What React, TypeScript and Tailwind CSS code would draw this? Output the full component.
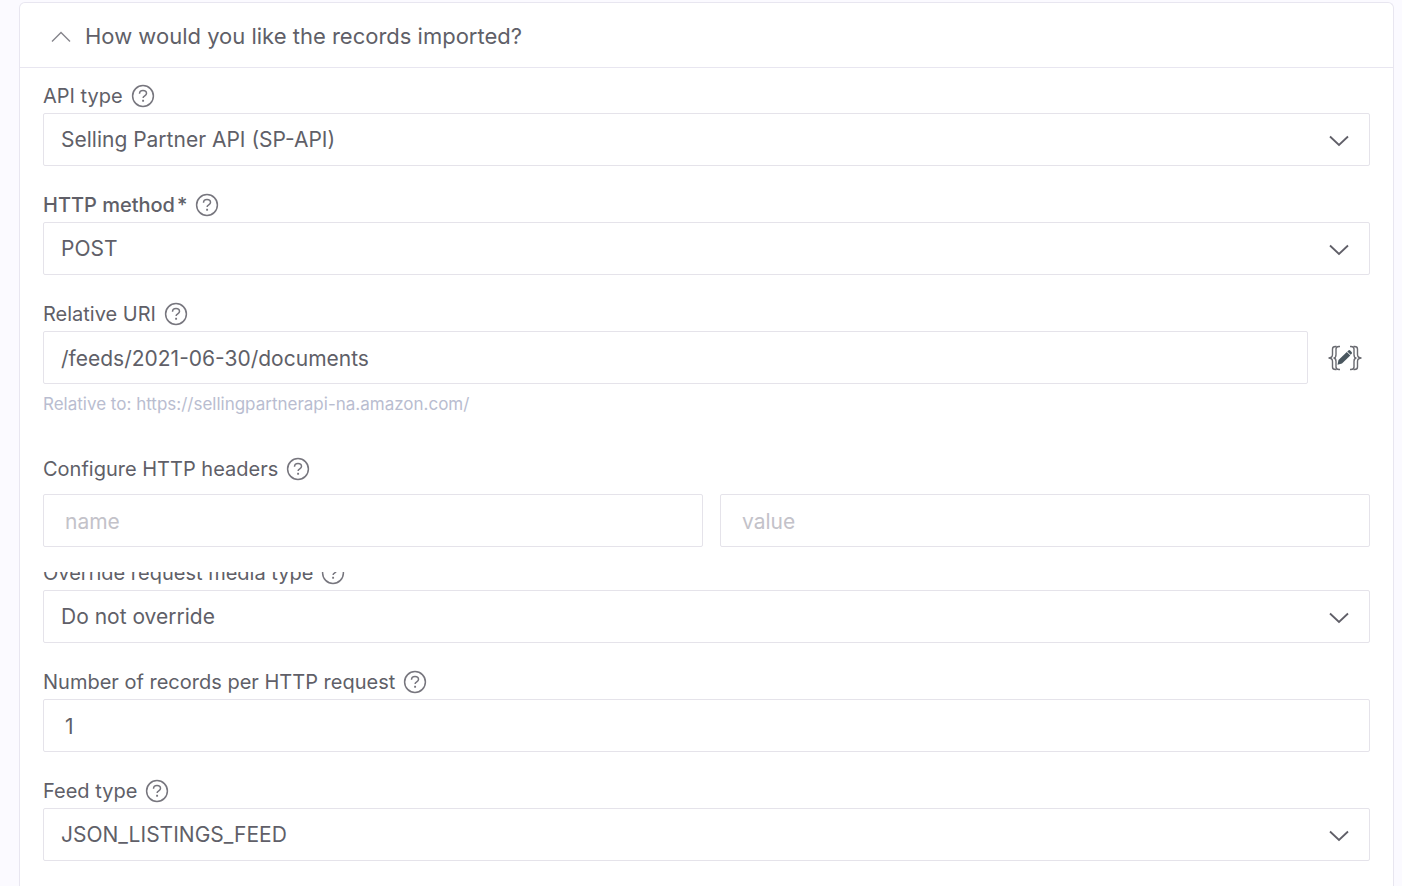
import { useState } from "react";
import type { ReactNode } from "react";

const boxClass =
  "block h-[53px] w-full min-w-0 rounded-xs border border-[#e5e3ea] bg-white text-[21px] text-[#605f68] outline-none placeholder:text-[#c3c2c9] focus:border-[#a9a6b8]";

const HelpIcon = () => (
  <svg viewBox="0 0 24 24" fill="none" stroke="#77767e" strokeWidth="1.5" className="size-6 shrink-0">
    <circle cx="12" cy="12" r="10.4" />
    <path d="M8.500 9.700c0-2 1.500-3.200 3.500-3.200s3.500 1.200 3.500 2.900c0 2.400-3.400 2.400-3.400 4.600" />
    <path d="M12.100 15.800v1.900" strokeWidth="1.9" />
  </svg>
);

const ExpressionIcon = () => (
  <svg viewBox="0 0 34 26" fill="none" stroke="#6a6b71" strokeWidth="1.4" className="h-[26px] w-[34px]">
    <path d="M8.500 1.500H7.500Q4.500 1.500 4.500 4v5.500Q4.500 13 .5 13q4 0 4 3.500V22q0 2.500 3 2.500h1" />
    <path d="M12 1.500H11Q8 1.500 8 4v5.500Q8 13 5.500 13q2.500 0 2.500 3.500V22q0 2.500 3 2.500h1" />
    <path d="M25.500 1.500h1q3 0 3 2.500v5.500q0 3.500 4 3.500-4 0-4 3.500V22q0 2.500-3 2.500h-1" />
    <path d="M22 1.500h1q3 0 3 2.500v5.500q0 3.500 2.500 3.500-2.500 0-2.500 3.500V22q0 2.500-3 2.500h-1" />
    <path
      d="M9.500 19.800l1-4.900 8.300-8 3.500 3.500-8.300 8.100z"
      fill="#4a575f"
      stroke="none"
    />
    <path d="M19.300 6.400l1.100-1q.9-.8 1.800.1l1.400 1.400q.9.900.1 1.800l-1 1z" fill="#4a575f" stroke="none" />
  </svg>
);

type FieldProps = {
  id: string;
  label: string;
  required?: boolean;
  clipped?: boolean;
  children: ReactNode;
};

const Field = ({ id, label, required, clipped, children }: FieldProps) => (
  <div>
    <div className={clipped ? "flex h-[18px] items-end overflow-hidden" : "flex h-[34px] items-end"}>
      <div className="flex h-[34px] shrink-0 items-center gap-2">
        <label
          htmlFor={id}
          className={required ? "text-xl font-medium text-[#605f68]" : "text-xl text-[#605f68]"}
        >
          {label}
          {required && <span className="ml-0.5">*</span>}
        </label>
        <button type="button" aria-label={`Help: ${label}`}>
          <HelpIcon />
        </button>
      </div>
    </div>
    {children}
  </div>
);

const Select = ({ id, options }: { id: string; options: string[] }) => {
  const [value, setValue] = useState(options[0]);

  return (
    <div className="relative">
      <select
        id={id}
        value={value}
        onChange={(e) => setValue(e.target.value)}
        className={`${boxClass} appearance-none pr-14 pl-[17px]`}
      >
        {options.map((option) => (
          <option key={option}>{option}</option>
        ))}
      </select>
      <svg
        viewBox="0 0 20 12"
        fill="none"
        stroke="#605f68"
        strokeWidth="1.8"
        className="pointer-events-none absolute top-[22px] right-[21px] h-3 w-5"
      >
        <path d="M1 1.500l9 8.500 9-8.500" />
      </svg>
    </div>
  );
};

const App = () => {
  const [open, setOpen] = useState(true);
  const [uri, setUri] = useState("/feeds/2021-06-30/documents");
  const [count, setCount] = useState("1");

  return (
    <div className="min-h-screen bg-[#fbfaff] pt-0.5 pr-2 pl-[19px] font-['Inter',sans-serif]">
      <section className="min-h-[calc(100vh-2px)] rounded-t-md border border-b-0 border-[#e8e6f0] bg-white">
        <button
          type="button"
          aria-expanded={open}
          onClick={() => setOpen(!open)}
          className="flex h-[65px] w-full items-center gap-3.5 border-b border-[#e8e6f0] pt-[3px] pl-[31px] text-[22px] text-[#605f68]"
        >
          <svg
            viewBox="0 0 20 12"
            fill="none"
            stroke="#85848b"
            strokeWidth="1.4"
            className={open ? "h-3 w-5" : "h-3 w-5 rotate-180"}
          >
            <path d="M1 10.500l9-9 9 9" />
          </svg>
          How would you like the records imported?
        </button>

        {open && (
          <form className="flex flex-col px-[23px] pt-[11px]" onSubmit={(e) => e.preventDefault()}>
            <div className="flex flex-col gap-[22px]">
              <Field id="api-type" label="API type">
                <Select id="api-type" options={["Selling Partner API (SP-API)"]} />
              </Field>
              <Field id="http-method" label="HTTP method" required>
                <Select id="http-method" options={["POST", "PUT", "PATCH", "DELETE"]} />
              </Field>
              <Field id="relative-uri" label="Relative URI">
                <div className="flex items-center gap-5">
                  <input
                    id="relative-uri"
                    value={uri}
                    onChange={(e) => setUri(e.target.value)}
                    className={`${boxClass} px-[17px] pt-0.5`}
                  />
                  <button type="button" aria-label="Open handlebars editor" className="mr-2 shrink-0">
                    <ExpressionIcon />
                  </button>
                </div>
                <p className="pt-2 text-[17px] leading-6 text-[#b9bdd0]">
                  Relative to: https://sellingpartnerapi-na.amazon.com/
                </p>
              </Field>
            </div>

            <div className="mt-9">
              <Field id="header-name" label="Configure HTTP headers">
                <div className="grid grid-cols-[66fr_65fr] gap-[17px] pt-2">
                  <input id="header-name" placeholder="name" className={`${boxClass} px-[21px] pt-0.5`} />
                  <input aria-label="Header value" placeholder="value" className={`${boxClass} px-[21px] pt-0.5`} />
                </div>
              </Field>
            </div>

            <div className="mt-[25px] flex flex-col gap-[22px] pb-6">
              <Field id="media-type" label="Override request media type" clipped>
                <Select id="media-type" options={["Do not override"]} />
              </Field>
              <Field id="record-count" label="Number of records per HTTP request">
                <input
                  id="record-count"
                  value={count}
                  onChange={(e) => setCount(e.target.value)}
                  className={`${boxClass} px-[21px] pt-0.5`}
                />
              </Field>
              <Field id="feed-type" label="Feed type">
                <Select id="feed-type" options={["JSON_LISTINGS_FEED"]} />
              </Field>
            </div>
          </form>
        )}
      </section>
    </div>
  );
};

export default App;
